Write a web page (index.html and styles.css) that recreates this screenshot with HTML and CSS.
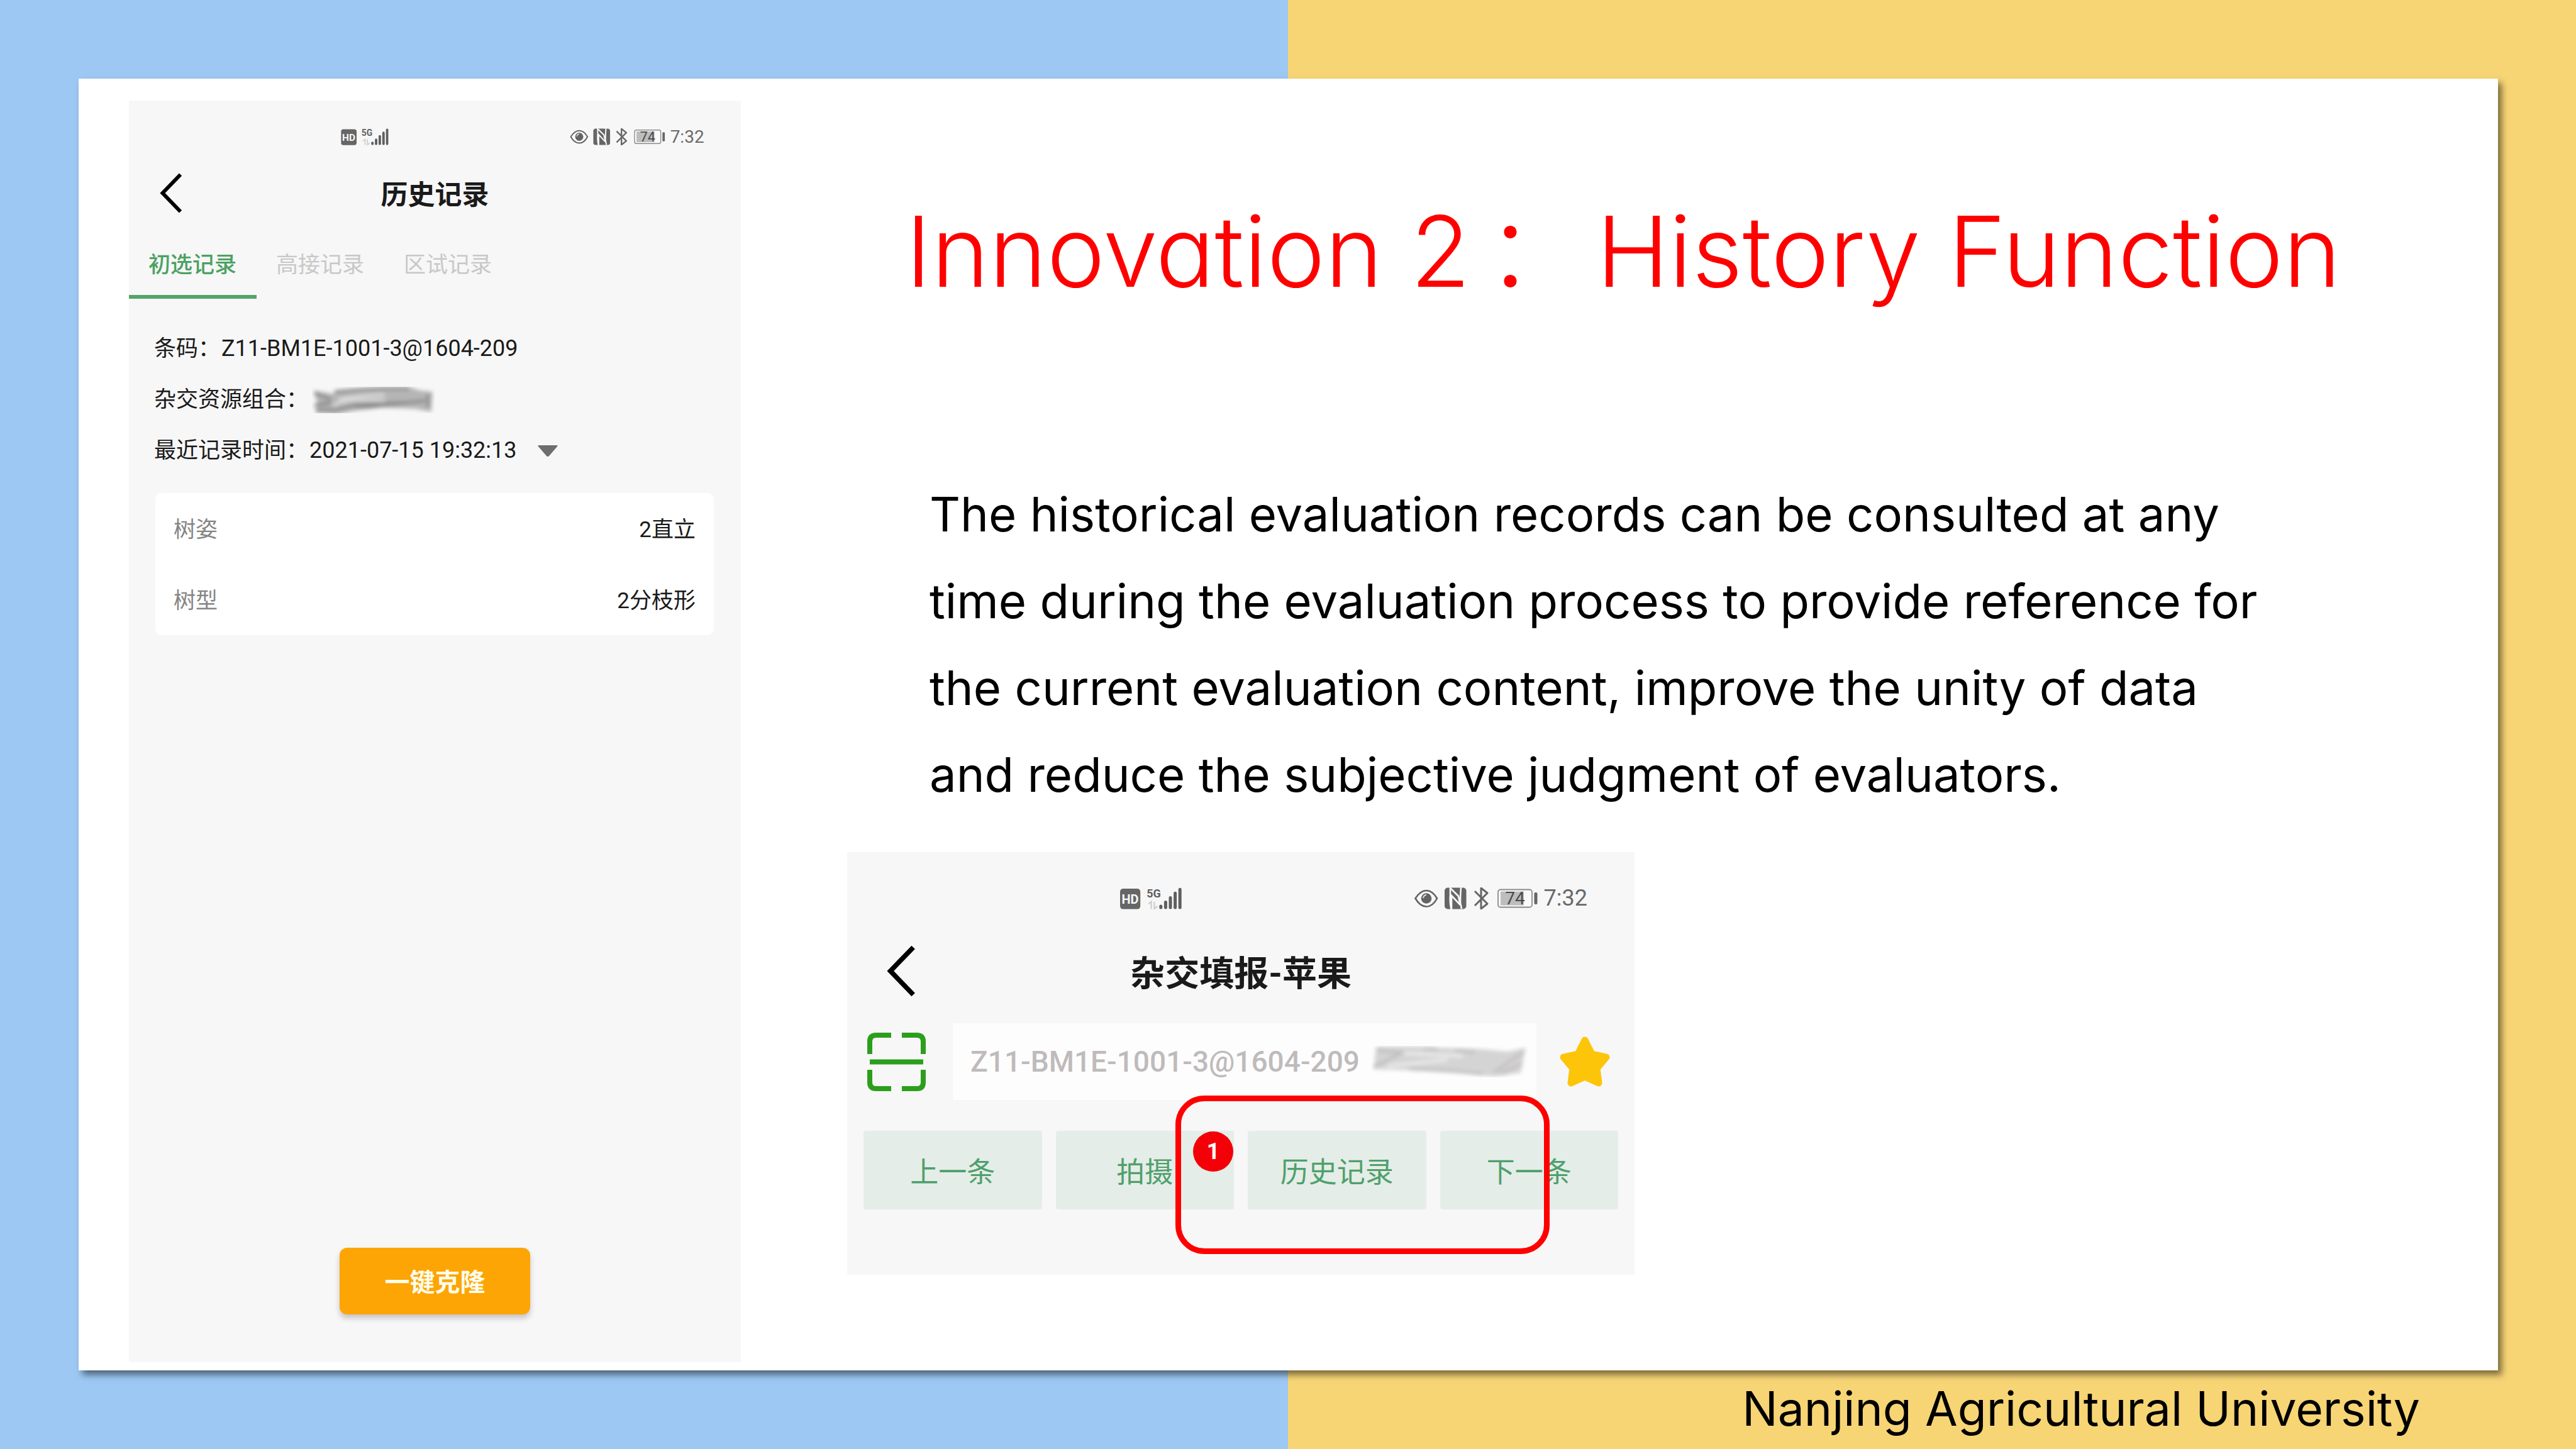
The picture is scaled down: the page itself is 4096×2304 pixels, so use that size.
FILE: index.html
```html
<!DOCTYPE html>
<html lang="en">
<head>
<meta charset="utf-8">
<title>Innovation 2: History Function</title>
<meta name="viewport" content="width=device-width, initial-scale=1">
<link rel="stylesheet" href="styles.css">
</head>
<body>
<svg class="sprite" aria-hidden="true">
  <symbol id="network" viewBox="0 0 490 175">
    <rect x="0" y="10" width="161" height="163" rx="24" fill="#666"/>
    <path d="M226 132l22-18v58M272 114v58l24-22" fill="none" stroke="#d0d0d0" stroke-width="12"/>
    <g stroke="#5f5f5f" stroke-width="25" stroke-linecap="round">
      <path d="M324 150v10M362 118v42M400 82v78M438 46v114M476 16v144"/>
    </g>
  </symbol>
  <symbol id="device" viewBox="0 0 196 35">
    <path d="M1.5 17.5C7 9 12 5 19 5s12 4 17 12.500C31 27 26 30.500 19 30.500S7 27 1.500 17.500z" fill="none" stroke="#636363" stroke-width="2.600"/>
    <circle cx="19" cy="17.500" r="8.300" fill="#636363"/>
    <path d="M14 17q1-5 5-5" fill="none" stroke="#ddd" stroke-width="2"/>
    <rect x="48" y="0.500" width="34.500" height="34" rx="5" fill="#666"/>
    <path d="M57 0v13q-1 10 1.500 22M57 1L70 14l2 10V17M59 35V13L73 28M74 0q-1 12-1 24L75 34" fill="none" stroke="#f7f7f7" stroke-width="2.600"/>
    <path d="M96 6l20 20-10 8V1l10 8-20 20" fill="none" stroke="#666" stroke-width="3" stroke-linejoin="round"/>
    <rect x="133" y="3.500" width="54" height="28" rx="4" fill="#fafafa" stroke="#8a8a8a" stroke-width="1.800"/>
    <rect x="137" y="6.500" width="37" height="22" fill="#bdbdbd"/>
    <rect x="190.500" y="8" width="5" height="19" rx="2" fill="#666"/>
  </symbol>
  <symbol id="back" viewBox="0 0 36 64">
    <path d="M33 2.500L4.500 32 33 61.500" fill="none" stroke="#000" stroke-width="6"/>
  </symbol>
</svg>

<main class="slide">
  <section class="phone phone-history" aria-label="历史记录">
    <div class="status">
      <svg class="network" viewBox="0 0 490 175">
        <use href="#network"/>
        <text x="80" y="130" class="hd" text-anchor="middle">HD</text>
        <text x="268" y="80" class="gen" text-anchor="middle">5G</text>
      </svg>
      <div class="status-right">
        <svg class="device" viewBox="0 0 196 35">
          <use href="#device"/>
          <text x="160" y="27" class="charge" text-anchor="middle">74</text>
        </svg>
        <span class="clock">7:32</span>
      </div>
    </div>
    <header class="bar">
      <button class="back" type="button" aria-label="返回"><svg><use href="#back"/></svg></button>
      <h2>历史记录</h2>
    </header>
    <nav class="tabs">
      <button type="button" class="tab active">初选记录</button>
      <button type="button" class="tab">高接记录</button>
      <button type="button" class="tab">区试记录</button>
    </nav>
    <div class="details">
      <p>条码：<span class="value">Z11-BM1E-1001-3@1604-209</span></p>
      <p>杂交资源组合：
        <svg class="smear" viewBox="0 0 196 42" aria-hidden="true">
          <defs><filter id="soft" x="-10%" y="-30%" width="120%" height="160%"><feGaussianBlur stdDeviation="3"/></filter></defs>
          <g filter="url(#soft)">
            <path d="M3 6l30 5 14-6 107-5 18 6 20 2-2 32-26-5-54-2-40 5-32 6-32-3 4-8z" fill="#b5b5b5"/>
            <path d="M4 10l26 10M4 30l26-5M6 37q34 2 62-8l80-4" fill="none" stroke="#8b8b8b" stroke-width="5"/>
            <path d="M36 8q60-6 118-5M60 30q28 4 50 0l70-8M184 12v20" fill="none" stroke="#8f8f8f" stroke-width="5"/>
            <path d="M42 20q50-8 74-7M34 31q12-14 82-9" fill="none" stroke="#dedede" stroke-width="4"/>
          </g>
        </svg>
      </p>
      <p>最近记录时间：<span class="value">2021-07-15 19:32:13</span>
        <button class="expand" type="button" aria-label="选择记录时间"><svg viewBox="0 0 32 18"><path d="M1 0h30q1 1 0 2L18 17q-2 2-4 0L1 2q-1-1 0-2z" fill="#6e6e6e"/></svg></button>
      </p>
    </div>
    <dl class="traits">
      <div><dt>树姿</dt><dd>2直立</dd></div>
      <div><dt>树型</dt><dd>2分枝形</dd></div>
    </dl>
    <button class="clone" type="button">一键克隆</button>
  </section>

  <section class="story">
    <h1>Innovation 2<span class="colon">：</span>History Function</h1>
    <p class="lead">The historical evaluation records can be consulted at any time during the evaluation process to provide reference for the current evaluation content, improve the unity of data and reduce the subjective judgment of evaluators.</p>

    <section class="phone phone-form" aria-label="杂交填报-苹果">
      <div class="status">
        <svg class="network" viewBox="0 0 490 175">
          <use href="#network"/>
          <text x="80" y="130" class="hd" text-anchor="middle">HD</text>
          <text x="268" y="80" class="gen" text-anchor="middle">5G</text>
        </svg>
        <div class="status-right">
          <svg class="device" viewBox="0 0 196 35">
            <use href="#device"/>
            <text x="160" y="27" class="charge" text-anchor="middle">74</text>
          </svg>
          <span class="clock">7:32</span>
        </div>
      </div>
      <header class="bar">
        <button class="back" type="button" aria-label="返回"><svg><use href="#back"/></svg></button>
        <h2>杂交填报-苹果</h2>
      </header>
      <div class="search">
        <button class="scan" type="button" aria-label="扫码">
          <svg viewBox="0 0 93 93"><path d="M4 34V14Q4 4 14 4h24M55 4h24q10 0 10 10v20M4 59v20q0 10 10 10h24M55 89h24q10 0 10-10V59M4 46.500h85" fill="none" stroke="#2b9f1c" stroke-width="8"/></svg>
        </button>
        <div class="field">
          <input type="text" value="Z11-BM1E-1001-3@1604-209" aria-label="条码">
          <svg class="smear" viewBox="0 0 250 50" aria-hidden="true">
            <g filter="url(#soft)">
              <path d="M8 1l66 0 40 2 62 2 42 4 28-6-8 40-42 6-60-6-70-4-62-2z" fill="#d4d4d4"/>
              <path d="M4 34l42-22M10 7l60 6M60 37q60 1 118 8M84 4l22 1M134 7l32 3" fill="none" stroke="#bcbcbc" stroke-width="4"/>
              <path d="M26 32l96-10M52 12l94 4" fill="none" stroke="#ebebeb" stroke-width="5"/>
              <path d="M196 42l46-32M206 44l34-16" fill="none" stroke="#c4c0c0" stroke-width="5"/>
            </g>
          </svg>
        </div>
        <button class="star" type="button" aria-label="收藏">
          <svg viewBox="0 0 80 80"><path d="M40 6L51 28 74 33 59 51 62 74 40 64 18 74 21 51 6 33 29 28z" fill="#fdc50a" stroke="#fdc50a" stroke-width="11" stroke-linejoin="round"/></svg>
        </button>
      </div>
      <div class="actions">
        <button type="button">上一条</button>
        <button type="button">拍摄<span class="badge">1</span></button>
        <button type="button">历史记录</button>
        <button type="button">下一条</button>
      </div>
      <div class="highlight"></div>
    </section>
  </section>
</main>
<footer class="credit">Nanjing Agricultural University</footer>
</body>
</html>
```
FILE: styles.css
```css
* {
  box-sizing: border-box;
  margin: 0;
  padding: 0;
}

body {
  display: flex;
  flex-direction: column;
  min-height: 100vh;
  padding: 125px 124px 0 125px;
  background: linear-gradient(to right, #9dc8f3 50%, #f7d575 50%);
  color: #000;
  font-family: Inter, "Noto Sans CJK SC", sans-serif;
}

button {
  border: 0;
  background: none;
  color: inherit;
  font: inherit;
}

svg {
  display: block;
}

.sprite {
  position: absolute;
  width: 0;
  height: 0;
}

.slide {
  flex: 1;
  display: grid;
  grid-template-columns: 973fr 2625fr;
  column-gap: 169px;
  padding: 35px 0 13px 80px;
  background: #fff;
  box-shadow: 6px 7px 10px rgba(0, 0, 0, 0.5);
}

/* Phone screens */

.phone {
  display: flex;
  flex-direction: column;
  background: #f7f7f7;
  color: #1a1a1a;
  font-family: Roboto, "Noto Sans CJK SC", sans-serif;
}

.status {
  display: flex;
  align-items: center;
  justify-content: space-between;
  padding: 0 6% 0 35%;
}

.status-right {
  display: flex;
  align-items: center;
}

.clock {
  color: #6a6a6a;
}

.network {
  margin-left: -4px;
}

.hd {
  fill: #f7f7f7;
  font: 700 100px Roboto, sans-serif;
}

.gen {
  fill: #5f5f5f;
  font: 700 90px Roboto, sans-serif;
}

.charge {
  fill: #4a4a4a;
  font: 400 28px Roboto, sans-serif;
}

.bar {
  display: grid;
  grid-template-columns: 1fr auto 1fr;
  align-items: center;
}

.back {
  justify-self: start;
}

.bar h2 {
  padding-bottom: 3px;
  font-weight: 700;
}

/* History screen */

.phone-history {
  padding: 40px 0 76px;
  font-size: 35px;
}

.phone-history .status {
  height: 34px;
}

.phone-history .network {
  width: 76px;
  height: 27px;
}

.phone-history .device {
  width: 152px;
  height: 27px;
}

.phone-history .status-right {
  gap: 8px;
  font-size: 28px;
}

.phone-history .bar {
  height: 72px;
  margin-top: 37px;
  padding: 0 49px;
}

.phone-history .back svg {
  width: 36px;
  height: 64px;
}

.phone-history h2 {
  font-size: 43px;
}

.tabs {
  display: flex;
  margin-top: 27px;
}

.tab {
  height: 105px;
  padding: 0 32px 4px 31px;
  border-bottom: 6px solid transparent;
  color: #c8c8c8;
}

.tab.active {
  border-color: #53a468;
  color: #4ba262;
  font-weight: 500;
}

.details {
  margin-top: 39px;
  padding: 0 40px;
  line-height: 81px;
}

.details p {
  display: flex;
  align-items: center;
}

.details .value {
  margin-left: 2px;
  font-size: 36px;
}

.details .smear {
  width: 196px;
  height: 42px;
  margin-left: 6px;
}

.expand {
  margin-left: 33px;
}

.expand svg {
  width: 32px;
  height: 18px;
}

.traits {
  margin: 27px 43px 0 42px;
  border-radius: 10px;
  background: #fff;
}

.traits div {
  display: flex;
  align-items: center;
  justify-content: space-between;
  height: 113px;
  padding: 0 29px 4px;
}

.traits dt {
  color: #858585;
}

.clone {
  align-self: center;
  width: 303px;
  height: 106px;
  margin-top: auto;
  padding-bottom: 2px;
  border-radius: 12px;
  background: #fda504;
  box-shadow: 0 6px 8px rgba(60, 40, 60, 0.25);
  color: #fffdec;
  font-size: 40px;
  font-weight: 700;
}

/* Story column */

.story h1 {
  margin-top: 138px;
  padding-left: 93px;
  color: #f00;
  font-feature-settings: "cv11";
  font-size: 156px;
  font-weight: 300;
  line-height: 180px;
  white-space: nowrap;
}

.colon {
  margin: 0 20px 0 24px;
  font-family: "Noto Sans CJK SC", sans-serif;
}

.lead {
  max-width: 2279px;
  margin-top: 258px;
  padding-left: 131px;
  font-size: 76px;
  line-height: 138px;
}

/* Form screen */

.phone-form {
  position: relative;
  width: 47.7%;
  margin-top: 55px;
  padding: 51px 0 104px;
  font-size: 45px;
}

.phone-form .status {
  height: 44px;
}

.phone-form .network {
  width: 98px;
  height: 35px;
}

.phone-form .device {
  width: 196px;
  height: 35px;
}

.phone-form .status-right {
  gap: 10px;
  font-size: 36px;
}

.phone-form .bar {
  height: 92px;
  margin-top: 48px;
  padding: 0 63px;
}

.phone-form .back svg {
  width: 46px;
  height: 82px;
}

.phone-form h2 {
  font-size: 55px;
}

.search {
  display: flex;
  align-items: center;
  margin-top: 37px;
  padding: 0 39px 0 32px;
}

.scan svg {
  width: 93px;
  height: 93px;
}

.field {
  flex: 1;
  display: flex;
  align-items: center;
  height: 122px;
  margin: 0 37px 0 43px;
  padding: 0 13px 0 28px;
  background: #fefdfe;
}

.field input {
  flex: 1;
  min-width: 0;
  border: 0;
  background: none;
  color: #bfbbbb;
  font: inherit;
  font-size: 46px;
  font-weight: 500;
}

.field .smear {
  width: 250px;
  height: 50px;
}

.star svg {
  width: 80px;
  height: 80px;
}

.actions {
  display: grid;
  grid-template-columns: repeat(4, 1fr);
  gap: 22px;
  margin-top: 49px;
  padding: 0 26px;
}

.actions button {
  position: relative;
  height: 125px;
  border-radius: 4px;
  background: #e5ede8;
  color: #4fa06c;
}

.badge {
  position: absolute;
  top: 1px;
  right: 1px;
  width: 64px;
  height: 64px;
  border-radius: 50%;
  background: #f30008;
  color: #fff;
  font-size: 36px;
  font-weight: 700;
  line-height: 64px;
}

.highlight {
  position: absolute;
  top: 387px;
  right: 10.8%;
  left: 41.7%;
  height: 252px;
  border: 9px solid #f00;
  border-radius: 46px;
  pointer-events: none;
}

.credit {
  height: 125px;
  padding-right: 124px;
  font-size: 75px;
  line-height: 121px;
  text-align: right;
}
```
